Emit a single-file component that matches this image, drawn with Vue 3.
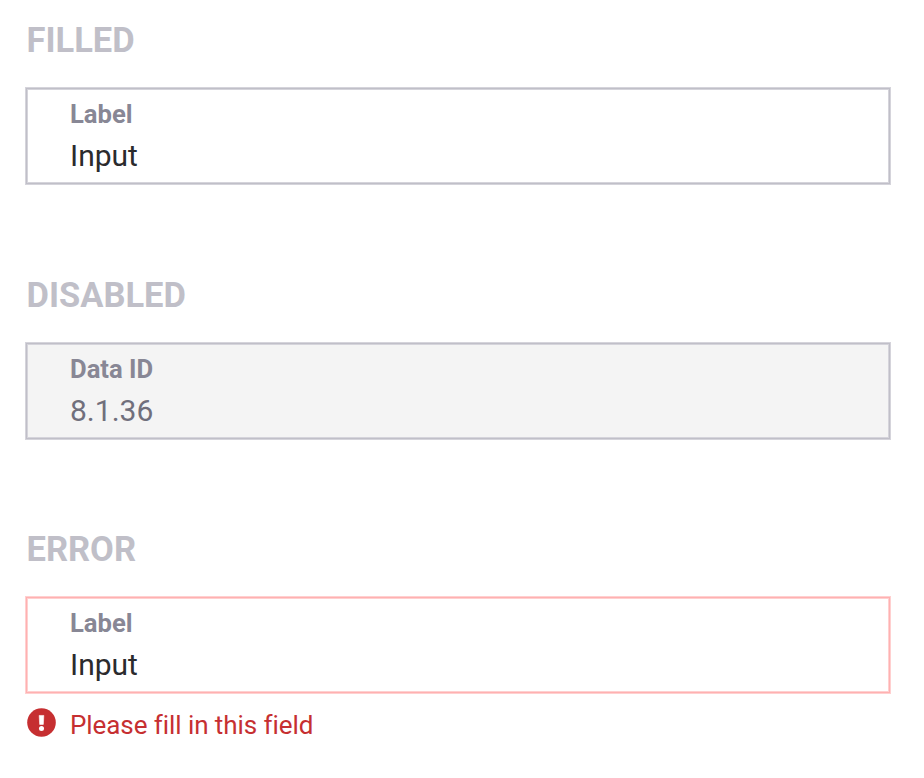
<script setup>
const fields = [
  { state: 'filled', label: 'Label', value: 'Input' },
  { state: 'disabled', label: 'Data ID', value: '8.1.36' },
  { state: 'error', label: 'Label', value: 'Input', message: 'Please fill in this field' },
]
</script>

<template>
  <main class="page">
    <section v-for="f in fields" :key="f.state" class="group">
      <h2 class="title">{{ f.state }}</h2>
      <div class="field" :class="f.state">
        <span class="label">{{ f.label }}</span>
        <span class="value">{{ f.value }}</span>
      </div>
      <p v-if="f.message" class="message">
        <svg class="icon" viewBox="0 0 30 30" aria-hidden="true">
          <circle cx="15" cy="15" r="14.8" fill="#c62f31" />
          <path d="M12.6 7.7h4.8l-.5 9.3h-3.8z" fill="#fff" stroke="#fff" stroke-width=".6" stroke-linejoin="round" />
          <circle cx="15" cy="21.2" r="2.6" fill="#fff" />
        </svg>
        <span>{{ f.message }}</span>
      </p>
    </section>
  </main>
</template>

<style>
body {
  margin: 0;
  background: #fff;
}
</style>

<style scoped>
.page {
  box-sizing: border-box;
  width: 924px;
  height: 778px;
  padding: 20px 33.5px 0 25px;
  overflow: hidden;
  font-family: Roboto, sans-serif;
  font-variant-ligatures: none;
}
.group {
  height: 254.5px;
}
.title {
  margin: 0 0 27px 1.5px;
  font-size: 34.5px;
  line-height: 40px;
  font-weight: 700;
  color: #c0bfc8;
  text-transform: uppercase;
}
.field {
  --edge: #c0bfc8;
  --edge-soft: #d5d4db;
  box-sizing: border-box;
  display: flex;
  flex-direction: column;
  height: 98px;
  padding: 11px 44px 0;
  border: 1px solid var(--edge-soft);
  box-shadow: inset 0 0 0 1px var(--edge), inset 0 0 0 2px var(--edge-soft);
}
.label {
  font-size: 25.6px;
  line-height: 30px;
  font-weight: 700;
  color: #888795;
}
.value {
  margin-top: 9px;
  font-size: 30px;
  line-height: 36px;
  color: #2b2b2d;
}
.disabled {
  background: #f4f4f4;
}
.disabled .value {
  color: #706f7c;
}
.error {
  --edge: #ffb1b1;
  --edge-soft: #ffd0d0;
}
.message {
  display: flex;
  align-items: center;
  gap: 14px;
  margin: 15px 0 0 2px;
  font-size: 26px;
  line-height: 32px;
  letter-spacing: -0.07px;
  color: #c62f31;
}
.icon {
  width: 29px;
  height: 29px;
  margin-top: -5px;
}
</style>
